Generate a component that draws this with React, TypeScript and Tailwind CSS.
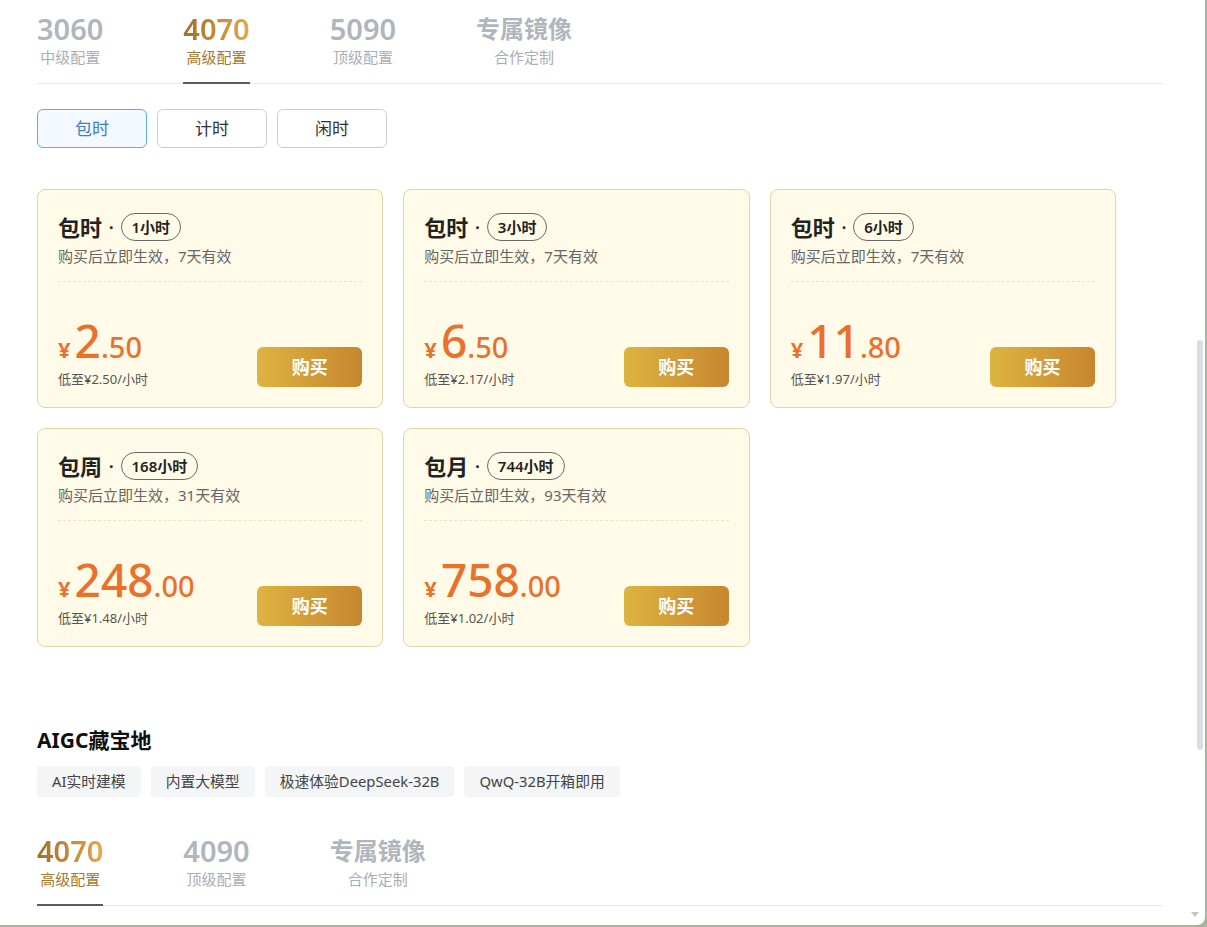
/**
 * GPU pricing panel — tier tabs, billing-mode switch, package cards,
 * and the AIGC section with its own tier tabs below.
 */

const font = { fontFamily: '"Noto Sans", "Noto Sans CJK SC", sans-serif' };

type Tier = { num: string; label: string; wide?: boolean };

const topTiers: Tier[] = [
  { num: "3060", label: "中级配置" },
  { num: "4070", label: "高级配置" },
  { num: "5090", label: "顶级配置" },
  { num: "专属镜像", label: "合作定制", wide: true },
];

const bottomTiers: Tier[] = [
  { num: "4070", label: "高级配置" },
  { num: "4090", label: "顶级配置" },
  { num: "专属镜像", label: "合作定制", wide: true },
];

type Plan = {
  kind: string;
  hours: string;
  days: number;
  int: string;
  dec: string;
  perHour: string;
};

const plans: Plan[] = [
  { kind: "包时", hours: "1小时", days: 7, int: "2", dec: "50", perHour: "2.50" },
  { kind: "包时", hours: "3小时", days: 7, int: "6", dec: "50", perHour: "2.17" },
  { kind: "包时", hours: "6小时", days: 7, int: "11", dec: "80", perHour: "1.97" },
  { kind: "包周", hours: "168小时", days: 31, int: "248", dec: "00", perHour: "1.48" },
  { kind: "包月", hours: "744小时", days: 93, int: "758", dec: "00", perHour: "1.02" },
];

const tags = ["AI实时建模", "内置大模型", "极速体验DeepSeek-32B", "QwQ-32B开箱即用"];

function TierTabs({ tiers, active }: { tiers: Tier[]; active: number }) {
  return (
    <div className="flex gap-[80px] border-b border-[#e8e8e8]">
      {tiers.map((t, i) => {
        const on = i === active;
        return (
          <div
            key={t.num}
            className={`flex flex-col items-center pb-[16px] -mb-px border-b-2 ${
              on ? "border-[#5a5a5f]" : "border-transparent"
            }`}
          >
            <div
              className={`leading-[34px] font-semibold ${t.wide ? "text-[24px] font-bold" : "text-[29px]"} ${
                on
                  ? "bg-linear-to-r from-[#a46d2a] to-[#e6a84a] bg-clip-text text-transparent"
                  : "text-[#b0b6bd]"
              }`}
            >
              {t.num}
            </div>
            <div
              className={`mt-[2px] text-[15px] leading-[18px] ${
                on ? "text-[#a8772f]" : "text-[#a9aeb4]"
              }`}
            >
              {t.label}
            </div>
          </div>
        );
      })}
    </div>
  );
}

function PlanCard({ p }: { p: Plan }) {
  return (
    <div className="h-[219px] flex flex-col rounded-[8px] border border-[#e5d3a8] bg-[#fffbe8] pt-[23px] px-[20px] pb-[20px]">
      <div className="flex items-center h-[28px]">
        <span className="text-[22px] font-bold text-[#222] leading-none">{p.kind}</span>
        <span className="mx-[7px] text-[16px] font-bold text-[#222]">·</span>
        <span className="h-[28px] flex items-center rounded-full border border-[#6a6a6a] px-[10px] text-[15px] font-semibold text-[#222]">
          {p.hours}
        </span>
      </div>
      <div className="mt-[5px] text-[15px] leading-[20px] text-[#666]">
        购买后立即生效，{p.days}天有效
      </div>
      <div className="mt-[15px] border-t border-dashed border-[#eee3c0]" />
      <div className="mt-auto flex items-end justify-between">
        <div>
          <div className="flex items-baseline text-[#e9712c] font-medium">
            <span className="text-[22px] leading-none font-bold mr-[4px]">¥</span>
            <span className="text-[46px] leading-none">{p.int}</span>
            <span className="text-[29px] leading-none">.{p.dec}</span>
          </div>
          <div className="mt-[8px] text-[13px] leading-[16px] text-[#555]">
            低至¥{p.perHour}/小时
          </div>
        </div>
        <button className="h-[40px] w-[105px] rounded-[6px] bg-linear-to-r from-[#ddb440] to-[#c7862f] text-[18px] font-bold text-white">
          购买
        </button>
      </div>
    </div>
  );
}

export default function App() {
  return (
    <div className="w-[1207px] h-[927px] bg-[#a8b59c] overflow-hidden" style={font}>
      <div className="relative w-[1205px] h-[925px] bg-white rounded-br-[8px] overflow-hidden">
        <div className="pl-[37px] pr-[42px] pt-[12px]">
          <TierTabs tiers={topTiers} active={1} />

          {/* billing mode */}
          <div className="mt-[25px] flex gap-[10px]">
            {["包时", "计时", "闲时"].map((m, i) => (
              <button
                key={m}
                className={`h-[39px] w-[110px] rounded-[6px] border text-[17px] ${
                  i === 0
                    ? "border-[#56b0ea] bg-[#f3f9ff] text-[#3d7fbf]"
                    : "border-[#cccccc] bg-white text-[#333]"
                }`}
              >
                {m}
              </button>
            ))}
          </div>

          {/* package cards */}
          <div className="mt-[41px] grid w-[1079px] grid-cols-3 gap-[20px]">
            {plans.map((p) => (
              <PlanCard key={p.hours} p={p} />
            ))}
          </div>

          {/* AIGC section */}
          <div className="mt-[81px] text-[21px] font-bold leading-[24px] text-[#111]">
            AIGC藏宝地
          </div>
          <div className="mt-[14px] flex gap-[10px]">
            {tags.map((t) => (
              <span
                key={t}
                className="h-[31px] flex items-center rounded-[4px] bg-[#f3f5f7] px-[15px] text-[14.8px] text-[#444]"
              >
                {t}
              </span>
            ))}
          </div>

          <div className="mt-[37px]">
            <TierTabs tiers={bottomTiers} active={0} />
          </div>
        </div>

        {/* scrollbar */}
        <div className="absolute right-[2px] top-[340px] h-[410px] w-[6px] rounded-full bg-[#dcdde0]" />
        <div className="absolute right-[6px] bottom-[8px] h-0 w-0 border-x-[4px] border-t-[5px] border-x-transparent border-t-[#c4c4c4]" />
      </div>
    </div>
  );
}
